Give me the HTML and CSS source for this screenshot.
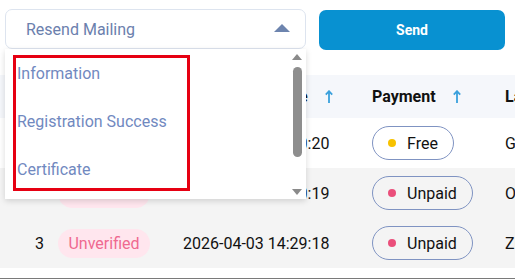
FILE: index.html
```html
<!DOCTYPE html>
<html lang="en">
<head>
    <meta charset="UTF-8">
    <title>Resend Mailing</title>
    <link rel="stylesheet" href="styles.css">
</head>
<body>
    <div class="toolbar">
        <div class="select-wrap">
            <div class="select">
                <span>Resend Mailing</span>
                <span class="caret"></span>
            </div>
            <div class="dropdown">
                <div class="options">
                    <div class="option">Information</div>
                    <div class="option">Registration Success</div>
                    <div class="option">Certificate</div>
                </div>
                <div class="scrollbar">
                    <span class="arrow-up"></span>
                    <span class="thumb"></span>
                    <span class="arrow-down"></span>
                </div>
                <div class="highlight"></div>
            </div>
        </div>
        <button class="send-button">Send</button>
    </div>

    <table class="list">
        <thead>
            <tr>
                <th class="col-no">#</th>
                <th class="col-status">Status</th>
                <th class="col-date">Registration Date <svg class="sort" width="8" height="13" viewBox="0 0 8 13"><path d="M4 13V1.5M0.8 4.6L4 1.2L7.2 4.6" fill="none" stroke="#3aa0dc" stroke-width="1.8"/></svg></th>
                <th class="col-pay">Payment <svg class="sort" width="8" height="13" viewBox="0 0 8 13"><path d="M4 13V1.5M0.8 4.6L4 1.2L7.2 4.6" fill="none" stroke="#3aa0dc" stroke-width="1.8"/></svg></th>
                <th class="col-name">Last Name</th>
            </tr>
        </thead>
        <tbody>
            <tr>
                <td class="col-no">1</td>
                <td class="col-status"><span class="tag">Verified</span></td>
                <td class="col-date">2026-04-03 14:30:20</td>
                <td class="col-pay"><span class="pill"><i class="dot free"></i>Free</span></td>
                <td class="col-name">Garcia</td>
            </tr>
            <tr class="shaded">
                <td class="col-no">2</td>
                <td class="col-status"><span class="tag">Unverified</span></td>
                <td class="col-date">2026-04-03 14:30:19</td>
                <td class="col-pay"><span class="pill"><i class="dot unpaid"></i>Unpaid</span></td>
                <td class="col-name">Olsen</td>
            </tr>
            <tr class="shaded">
                <td class="col-no">3</td>
                <td class="col-status"><span class="tag">Unverified</span></td>
                <td class="col-date">2026-04-03 14:29:18</td>
                <td class="col-pay"><span class="pill"><i class="dot unpaid"></i>Unpaid</span></td>
                <td class="col-name">Zhang</td>
            </tr>
        </tbody>
    </table>
    <div class="footer-line"></div>
</body>
</html>
```

FILE: styles.css
```css
html, body {
    overflow: hidden;
}
body {
    margin: 0;
    width: 515px;
    height: 279px;
    font-family: Roboto, "Liberation Sans", sans-serif;
    color: #111;
    background-color: white;
}
.toolbar {
    display: flex;
    align-items: flex-start;
    gap: 13px;
    padding: 9px 0 0 5px;
    height: 66px;
    box-sizing: border-box;
}
.select-wrap {
    position: relative;
    z-index: 2;
}
.select {
    width: 301px;
    height: 40px;
    box-sizing: border-box;
    border: 1px solid #dde4ef;
    border-radius: 7px;
    display: flex;
    align-items: center;
    justify-content: space-between;
    padding: 0 15px 0 20px;
    font-size: 16px;
    color: #6b80ad;
}
.caret {
    width: 0;
    height: 0;
    border-left: 8px solid transparent;
    border-right: 8px solid transparent;
    border-bottom: 8px solid #6d84ae;
    margin-top: -2px;
}
.dropdown {
    position: absolute;
    top: 40px;
    left: 0;
    width: 301px;
    height: 150px;
    background-color: white;
    box-shadow: 0 2px 6px rgba(0,0,0,0.15);
    display: flex;
}
.options {
    flex: 1;
}
.option {
    height: 48px;
    line-height: 50px;
    padding-left: 12px;
    font-size: 16px;
    color: #7189bf;
}
.scrollbar {
    width: 14px;
    display: flex;
    flex-direction: column;
    align-items: center;
    padding: 5px 0 4px;
    margin-right: 2px;
}
.arrow-up, .arrow-down {
    width: 0;
    height: 0;
    border-left: 5px solid transparent;
    border-right: 5px solid transparent;
}
.arrow-up {
    border-bottom: 6px solid #8a8a8a;
}
.arrow-down {
    border-top: 6px solid #8a8a8a;
}
.thumb {
    width: 9px;
    height: 90px;
    margin: 7px 0 auto;
    background-color: #8e8e8e;
    border-radius: 5px;
}
.highlight {
    position: absolute;
    left: 8px;
    top: 6px;
    width: 177px;
    height: 136px;
    border: 3px solid #e60012;
    box-sizing: border-box;
}
.send-button {
    width: 186px;
    height: 40px;
    margin-top: 1px;
    background-color: #0891d1;
    color: white;
    border: none;
    border-radius: 7px;
    font-family: Roboto, "Liberation Sans", sans-serif;
    font-size: 14px;
    font-weight: bold;
    cursor: pointer;
}
.list {
    border-collapse: collapse;
    table-layout: fixed;
    width: 620px;
    font-size: 16px;
    margin-top: 9px;
}
.list th {
    height: 43px;
    background-color: #f5f7fb;
    font-weight: bold;
    text-align: left;
    padding: 0;
    white-space: nowrap;
}
.list td {
    height: 50px;
    padding: 0;
}
.shaded td {
    background-color: #f4f4f4;
}
.sort {
    margin-left: 13px;
    vertical-align: -1px;
}
.list .col-no {
    width: 44px;
    text-align: right;
}
.list .col-status {
    width: 112px;
    padding-left: 14px;
}
.list .col-date {
    width: 176px;
    padding-left: 13px;
}
.list .col-pay {
    width: 118px;
    padding-left: 13px;
}
.list .col-name {
    padding-left: 15px;
}
.tag {
    display: inline-block;
    width: 92px;
    height: 29px;
    line-height: 29px;
    text-align: center;
    border-radius: 15px;
    background-color: #ffe6ee;
    color: #ef6a90;
}
.pill {
    display: inline-flex;
    align-items: center;
    height: 34px;
    box-sizing: border-box;
    padding: 0 15px;
    border: 1px solid #7f93c2;
    border-radius: 17px;
}
.dot {
    width: 8px;
    height: 8px;
    border-radius: 50%;
    margin-right: 11px;
}
.dot.free {
    background-color: #f7c200;
}
.dot.unpaid {
    background-color: #ea4f7b;
}
.footer-line {
    margin-top: 10px;
    height: 3px;
    background-color: #7a7a7a;
}
```
